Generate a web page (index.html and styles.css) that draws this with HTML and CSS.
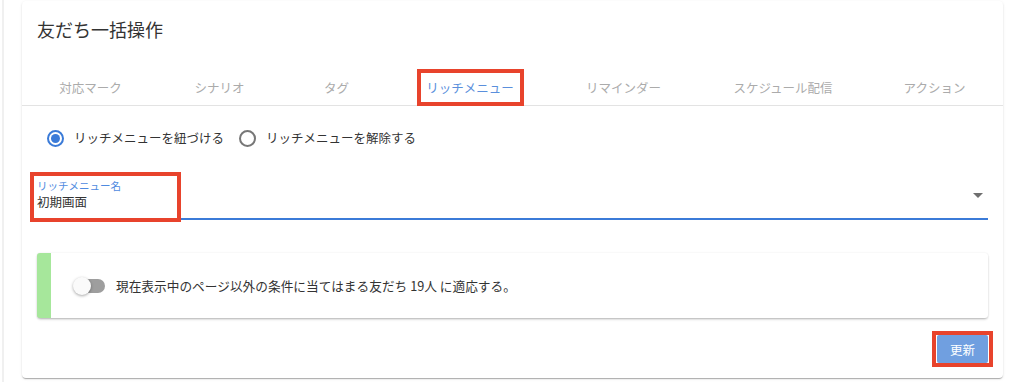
FILE: index.html
```html
<!DOCTYPE html>
<html lang="ja">
<head>
<meta charset="utf-8">
<title>友だち一括操作</title>
<link rel="stylesheet" href="styles.css">
</head>
<body>
<div class="page">
  <div class="rail"></div>
  <section class="card">
    <h1 class="title">友だち一括操作</h1>
    <nav class="tabs">
      <div class="tab">対応マーク</div>
      <div class="tab">シナリオ</div>
      <div class="tab">タグ</div>
      <div class="tab active"><span class="mark mark-tab">リッチメニュー</span></div>
      <div class="tab">リマインダー</div>
      <div class="tab">スケジュール配信</div>
      <div class="tab">アクション</div>
    </nav>
    <div class="body">
      <div class="radios">
        <label class="radio checked"><span class="ring"></span>リッチメニューを紐づける</label>
        <label class="radio"><span class="ring"></span>リッチメニューを解除する</label>
      </div>
      <div class="field">
        <span class="field-mark"></span>
        <div class="flabel">リッチメニュー名</div>
        <div class="fvalue">初期画面</div>
        <span class="caret"></span>
      </div>
      <div class="alert">
        <span class="switch"><span class="track"></span><span class="thumb"></span></span>
        <span class="alert-text">現在表示中のページ以外の条件に当てはまる友だち 19人 に適応する。</span>
      </div>
      <div class="actions">
        <span class="mark mark-btn"><button class="btn" type="button">更新</button></span>
      </div>
    </div>
  </section>
</div>
</body>
</html>
```
FILE: styles.css
```css
* { box-sizing: border-box; }
html, body { margin: 0; padding: 0; background: #ffffff; }
body {
  font-family: "Noto Sans CJK JP", "Noto Sans", sans-serif;
  color: #333333;
  width: 1024px;
  height: 382px;
  overflow: hidden;
}
.page {
  display: flex;
  padding-top: 1px;
  height: 382px;
}
.rail {
  width: 2px;
  margin-left: 2px;
  margin-right: 18px;
  background: #f0f0f0;
  height: 382px;
  margin-top: -1px;
}
.card {
  width: 981px;
  align-self: flex-start;
  background: #fff;
  border-radius: 4px;
  box-shadow: 0 2px 1px -1px rgba(0,0,0,.18), 0 1px 1px 0 rgba(0,0,0,.12), 0 1px 3px 0 rgba(0,0,0,.10);
}
.title {
  margin: 0;
  padding: 15px 15px 0;
  font-size: 18px;
  line-height: 27px;
  font-weight: 400;
  color: #333;
}
.tabs {
  display: grid;
  grid-template-columns: 137fr 121fr 113fr 154fr 153fr 166fr 137fr;
  margin-top: 27px;
  height: 36px;
  border-bottom: 1px solid #e3e3e3;
}
.tab {
  display: flex;
  justify-content: center;
  align-items: flex-start;
  padding-top: 8px;
  font-size: 12.5px;
  line-height: 19px;
  color: #ababab;
  white-space: nowrap;
}
.tab.active { color: #5a8fdc; }
.mark { position: relative; display: inline-block; }
.mark::after {
  content: "";
  position: absolute;
  border: 4px solid #e8432c;
  pointer-events: none;
}
.mark-tab::after { left: -9px; right: -10px; top: -9px; bottom: -9px; }
.body { padding: 22px 15px 15px; }
.radios {
  display: flex;
  align-items: center;
  height: 20px;
}
.radio {
  display: flex;
  align-items: center;
  font-size: 12.5px;
  line-height: 20px;
  color: #333;
  margin-right: 15px;
}
.ring {
  width: 17px;
  height: 17px;
  border-radius: 50%;
  border: 2px solid #777;
  margin-left: 10px;
  margin-right: 10px;
  display: flex;
  align-items: center;
  justify-content: center;
}
.radio + .radio .ring { margin-left: 0; }
.radio.checked .ring { border-color: #3b7bd8; }
.radio.checked .ring::after {
  content: "";
  width: 9px;
  height: 9px;
  border-radius: 50%;
  background: #3b7bd8;
}
.field {
  position: relative;
  margin-top: 28px;
  padding-top: 3px;
  padding-bottom: 7px;
  border-bottom: 2px solid #3b7bd8;
}
.field-mark {
  position: absolute;
  left: -7px;
  top: -4px;
  width: 151px;
  height: 50px;
  border: 4px solid #e8432c;
}
.flabel {
  font-size: 10.5px;
  line-height: 14px;
  color: #4f8ae0;
}
.fvalue {
  font-size: 12.5px;
  line-height: 18px;
  color: #333;
}
.caret {
  position: absolute;
  right: 5px;
  top: 17px;
  width: 0;
  height: 0;
  border-left: 5px solid transparent;
  border-right: 5px solid transparent;
  border-top: 5px solid #6f6f6f;
}
.alert {
  margin-top: 33px;
  height: 65px;
  display: flex;
  align-items: center;
  border-left: 14px solid #a6e79b;
  border-radius: 3px;
  padding-left: 22px;
  background: #fff;
  box-shadow: 0 2px 3px -1px rgba(0,0,0,.22), 0 1px 2px 0 rgba(0,0,0,.10), 0 0 2px 0 rgba(0,0,0,.08);
}
.switch {
  position: relative;
  width: 32px;
  height: 18px;
  flex: none;
}
.track {
  position: absolute;
  left: 9px;
  top: 2px;
  width: 23px;
  height: 14px;
  border-radius: 7px;
  background: #9e9e9e;
}
.thumb {
  position: absolute;
  left: 0;
  top: 0;
  width: 18px;
  height: 18px;
  border-radius: 50%;
  background: #fafafa;
  box-shadow: 0 1px 3px rgba(0,0,0,.35);
}
.alert-text {
  margin-left: 11px;
  font-size: 12.7px;
  line-height: 18px;
  color: #333;
}
.actions {
  display: flex;
  justify-content: flex-end;
  margin-top: 17px;
}
.mark-btn::after { left: -5px; right: -5px; top: -4px; bottom: -4px; }
.btn {
  display: block;
  width: 51px;
  height: 28px;
  border: none;
  border-radius: 2px;
  background: #709fe0;
  color: #fff;
  font-family: inherit;
  font-size: 12.5px;
  padding: 0;
}
```
